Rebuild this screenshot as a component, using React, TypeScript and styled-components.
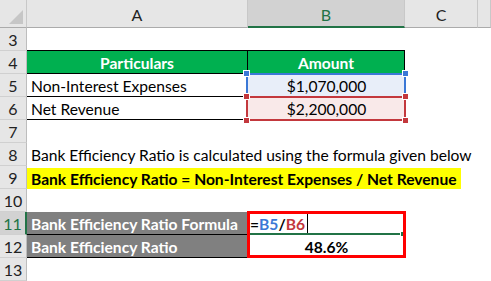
import React from 'react';
import styled, {createGlobalStyle, css} from 'styled-components';

const GlobalStyle = createGlobalStyle`
  html, body {
    margin: 0;
    padding: 0;
    background: #FFF;
    overflow: hidden;
  }
  body {
    font-family: Lato, "Liberation Sans", sans-serif;
  }
`;

const Sheet = styled.div`
  display: grid;
  grid-template-columns: 27px 221px 157px 73px 1fr;
  grid-template-rows: 28px repeat(11, 23px);
  width: 491px;
  height: 281px;
  font-size: 15.6px;
  color: #000;
`;

const Corner = styled.div`
  background: #e6e6e6;
  border-right: 1px solid #c8c8c8;
  border-bottom: 1px solid #ababab;
  box-sizing: border-box;
  position: relative;
  &::after {
    content: '';
    position: absolute;
    right: 3px;
    bottom: 3px;
    width: 0;
    height: 0;
    border-left: 14px solid transparent;
    border-bottom: 14px solid #c6c6c6;
  }
`;

const ColHead = styled.div<{ $active?: boolean }>`
  display: flex;
  align-items: center;
  justify-content: center;
  box-sizing: border-box;
  background: ${p => p.$active ? '#d2d2d2' : '#e6e6e6'};
  border-right: 1px solid #c8c8c8;
  border-bottom: ${p => p.$active ? '2px solid #217346' : '1px solid #ababab'};
  color: ${p => p.$active ? '#217346' : '#222'};
  font-size: 16px;
  padding-top: 2px;
`;

const RowHead = styled.div<{ $active?: boolean }>`
  display: flex;
  align-items: center;
  justify-content: center;
  box-sizing: border-box;
  background: ${p => p.$active ? '#d2d2d2' : '#e6e6e6'};
  border-right: ${p => p.$active ? '2px solid #217346' : '1px solid #bdbdbd'};
  border-bottom: 1px solid #d0d0d0;
  color: ${p => p.$active ? '#217346' : '#222'};
  font-size: 16px;
`;

type Fill = 'none' | 'green' | 'gray' | 'blue' | 'pink';

const fills: { [K in Fill]: string } = {
  none: 'transparent',
  green: '#00b050',
  gray: '#808080',
  blue: '#e8eef9',
  pink: '#f9e9e9',
};

const Cell = styled.div<{ $fill?: Fill; $bold?: boolean; $center?: boolean; $bottom?: boolean; $right?: boolean; $light?: boolean }>`
  display: flex;
  align-items: center;
  justify-content: ${p => p.$center ? 'center' : 'flex-start'};
  box-sizing: border-box;
  position: relative;
  padding: 1px 4px 0;
  white-space: nowrap;
  overflow: visible;
  background: ${p => fills[p.$fill || 'none']};
  font-weight: ${p => p.$bold ? 700 : 400};
  color: ${p => p.$light ? '#FFF' : '#000'};
  ${p => p.$bottom && css`border-bottom: 1px solid #000;`}
  ${p => p.$right && css`border-right: 1px solid #000;`}
`;

const Highlight = styled.span`
  background: #ffff00;
  font-weight: 700;
  margin-left: -4px;
  padding: 2px 4px 1px;
  position: relative;
  z-index: 1;
`;

const Overflow = styled.span`
  position: relative;
  z-index: 1;
`;

/* selection overlays: they sit over the cell they mark */
const RangeBox = styled.div<{ $color: string }>`
  position: absolute;
  left: -2px;
  top: -1px;
  right: -1px;
  bottom: -1px;
  border: 2px solid ${p => p.$color};
  pointer-events: none;
  z-index: 2;
`;

const Handle = styled.span<{ $color: string; $x: 'l' | 'r'; $y: 't' | 'b' }>`
  position: absolute;
  width: 5px;
  height: 5px;
  background: ${p => p.$color};
  border: 1px solid #FFF;
  ${p => p.$x === 'l' ? 'left: -5px;' : 'right: -5px;'}
  ${p => p.$y === 't' ? 'top: -5px;' : 'bottom: -5px;'}
`;

const FormulaBox = styled.div`
  position: absolute;
  left: -1px;
  top: -1px;
  right: -1px;
  height: 47px;
  box-sizing: border-box;
  border: 3px solid #ff0000;
  pointer-events: none;
  z-index: 3;
`;

const Editing = styled.div`
  display: flex;
  align-items: stretch;
  align-self: stretch;
  flex: 1;
  padding: 1px 0 0 0;
  border-bottom: 2px solid #217346;
  margin: 0 1px 0 -2px;
  font-weight: 700;
  position: relative;
  &::after {
    content: '';
    position: absolute;
    right: -4px;
    bottom: -3px;
    width: 3px;
    height: 4px;
    background: #217346;
  }
`;

const Ref = styled.span<{ $color: string }>`
  color: ${p => p.$color};
  display: flex;
  align-items: center;
`;

const Caret = styled.span`
  width: 1px;
  background: #000;
  margin: 0 0 0 2px;
`;

const blue = '#3b78d6';
const red = '#c3383d';

function App() {
  return (
    <>
      <GlobalStyle/>
      <Sheet>
        <Corner/>
        <ColHead>A</ColHead>
        <ColHead $active>B</ColHead>
        <ColHead>C</ColHead>
        <ColHead/>

        <RowHead>3</RowHead>
        <Cell $bottom/>
        <Cell $bottom/>
        <Cell/>
        <Cell/>

        <RowHead>4</RowHead>
        <Cell $fill="green" $bold $center $light $bottom $right>Particulars</Cell>
        <Cell $fill="green" $bold $center $light $bottom $right>Amount</Cell>
        <Cell/>
        <Cell/>

        <RowHead>5</RowHead>
        <Cell $bottom $right>Non-Interest Expenses</Cell>
        <Cell $fill="blue" $center>
          $1,070,000
          <RangeBox $color={blue}>
            <Handle $color={blue} $x="l" $y="t"/>
            <Handle $color={blue} $x="r" $y="t"/>
          </RangeBox>
        </Cell>
        <Cell/>
        <Cell/>

        <RowHead>6</RowHead>
        <Cell $bottom $right>Net Revenue</Cell>
        <Cell $fill="pink" $center>
          $2,200,000
          <RangeBox $color={red}>
            <Handle $color={red} $x="l" $y="t"/>
            <Handle $color={red} $x="r" $y="t"/>
            <Handle $color={red} $x="l" $y="b"/>
            <Handle $color={red} $x="r" $y="b"/>
          </RangeBox>
        </Cell>
        <Cell/>
        <Cell/>

        <RowHead>7</RowHead>
        <Cell/>
        <Cell/>
        <Cell/>
        <Cell/>

        <RowHead>8</RowHead>
        <Cell><Overflow>Bank Efficiency Ratio is calculated using the formula given below</Overflow></Cell>
        <Cell/>
        <Cell/>
        <Cell/>

        <RowHead>9</RowHead>
        <Cell><Highlight>Bank Efficiency Ratio = Non-Interest Expenses / Net Revenue</Highlight></Cell>
        <Cell/>
        <Cell/>
        <Cell/>

        <RowHead>10</RowHead>
        <Cell/>
        <Cell/>
        <Cell/>
        <Cell/>

        <RowHead $active>11</RowHead>
        <Cell $fill="gray" $bold $light $bottom $right>Bank Efficiency Ratio Formula</Cell>
        <Cell>
          <Editing>
            <Ref $color="#000">=</Ref>
            <Ref $color={blue}>B5</Ref>
            <Ref $color="#000">/</Ref>
            <Ref $color={red}>B6</Ref>
            <Caret/>
          </Editing>
          <FormulaBox/>
        </Cell>
        <Cell/>
        <Cell/>

        <RowHead>12</RowHead>
        <Cell $fill="gray" $bold $light $bottom $right>Bank Efficiency Ratio</Cell>
        <Cell $bold $center>48.6%</Cell>
        <Cell/>
        <Cell/>

        <RowHead>13</RowHead>
        <Cell/>
        <Cell/>
        <Cell/>
        <Cell/>
      </Sheet>
    </>
  );
}

export default App;
